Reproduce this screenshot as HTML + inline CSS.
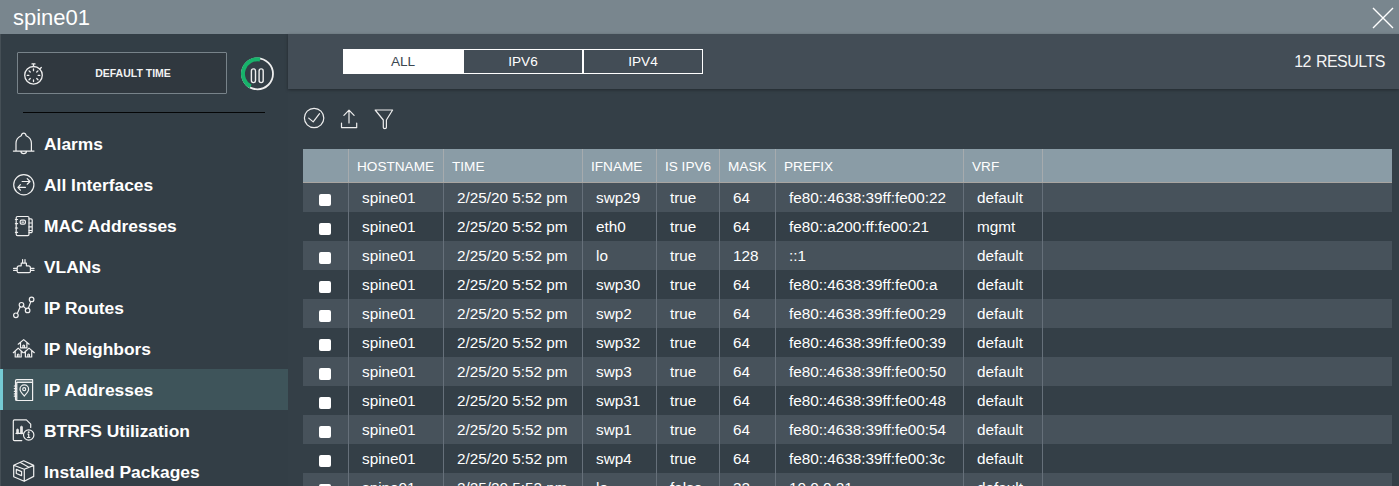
<!DOCTYPE html>
<html><head><meta charset="utf-8">
<style>
*{box-sizing:border-box;margin:0;padding:0}
html,body{width:1399px;height:486px;overflow:hidden;background:#343f47;font-family:"Liberation Sans",sans-serif;color:#fff}
#hdr{position:absolute;left:0;top:0;width:1399px;height:34px;background:#79868e}
#title{position:absolute;left:13px;top:5px;font-size:22px;line-height:26px;color:#fff}
#close{position:absolute;left:1372px;top:7px;width:22px;height:22px}
#side{position:absolute;left:0;top:34px;width:288px;height:452px;background:#333e46}
#dt{position:absolute;left:17px;top:18px;width:210px;height:42px;border:1px solid #78838a;background:#30383f;border-radius:1px}
#dt span{position:absolute;left:0;width:100%;text-align:center;top:14px;font-size:10.5px;font-weight:700;line-height:13px;padding-left:22px;color:#f2f2f2}
#sep{position:absolute;left:23px;top:78px;width:242px;height:1px;background:#050607}
.mi{position:absolute;left:0;width:288px;height:41px}
.mi .lbl{position:absolute;left:44px;top:11px;font-size:17.4px;font-weight:700;line-height:20px;white-space:nowrap}
.mi svg{position:absolute;left:0;top:0}
.mi.sel{background:#3e545a}
.mi.sel:before{content:"";position:absolute;left:0;top:0;width:3px;height:41px;background:#74cad3}
#main{position:absolute;left:288px;top:34px;width:1111px;height:452px;background:#343f47}
#topp{position:absolute;left:0;top:0;width:1111px;height:55px;background:#434d56;box-shadow:0 1px 3px rgba(0,0,0,.35)}
.seg{position:absolute;top:15px;height:25px;width:120px;border:1px solid #fff;font-size:13.6px;line-height:23px;text-align:center;color:#fff}
.seg.on{background:#fff;color:#3b4650}
#res{position:absolute;right:14px;top:18px;font-size:16px;line-height:20px;color:#f4f4f4;letter-spacing:-0.5px;word-spacing:1px}
#tools svg{position:absolute}
#tbl{position:absolute;left:303px;top:149px;width:1089px;border-collapse:collapse;table-layout:fixed}
.th{position:absolute;background:#8a9ca6}
.thb{position:absolute;height:1px;background:#a8a5a1}
.ht{position:absolute;font-size:13.6px;line-height:35px;color:#fff;white-space:nowrap}
.ro,.re{position:absolute;height:29px;background:#47525b}
.re{background:#343f47}
.cb{position:absolute;width:12px;height:12px;background:#fff;border-radius:2px}
.td{position:absolute;font-size:15.3px;line-height:29px;color:#fff;white-space:nowrap}
.vlh{position:absolute;width:1px;height:33px;background:#a6abae}
.vl{position:absolute;width:1px;height:310px;background:#66707a}
</style></head><body>
<div id="hdr"><div id="title">spine01</div>
<svg id="close" viewBox="0 0 22 22"><path d="M1 1L21 21M21 1L1 21" stroke="#fff" stroke-width="1.4"/></svg>
</div>
<div id="side"><div style="position:absolute;left:0;top:0;width:1px;height:452px;background:#454f56"></div>
  <div id="dt"><svg style="position:absolute;left:0;top:0" width="60" height="45" viewBox="0 0 60 45" fill="none" stroke="#eee" stroke-width="1.3" stroke-linecap="round"><g transform="translate(-1 1)"><circle cx="16.5" cy="21.3" r="8.8"/><path d="M16.5 12.5V10M15 9.9H18M22.8 15L24.3 13.5"/><path d="M16.50 16.70L16.50 15.00M19.75 18.05L20.95 16.85M21.10 21.30L22.80 21.30M19.75 24.55L20.95 25.75M16.50 25.90L16.50 27.60M13.25 24.55L12.05 25.75M11.90 21.30L10.20 21.30M13.25 18.05L12.05 16.85" stroke-width="1.3"/></g></svg><span>DEFAULT TIME</span></div>
  <svg id="pause" style="position:absolute;left:232px;top:16px" width="50" height="48" viewBox="0 0 50 48" fill="none"><circle cx="25.5" cy="23.8" r="15.5" stroke="#eee" stroke-width="1.8"/><path d="M28 9.5A14.5 14.5 0 0 0 18.7 36.6" stroke="#17b36b" stroke-width="4"/><rect x="19.4" y="18.9" width="4.1" height="13.7" rx="2" stroke="#eee" stroke-width="1.4"/><rect x="27.1" y="18.9" width="4.1" height="13.7" rx="2" stroke="#eee" stroke-width="1.4"/></svg>
  <div id="sep"></div>
  <div class="mi" style="top:89px"><svg width="44" height="41" viewBox="0 0 44 41" fill="none" stroke="#f0f0f0" stroke-width="1.2" stroke-linecap="round" stroke-linejoin="round"><path d="M16 28V20.3C16 16.2 18.2 14.2 21.2 12.8C21.6 11 22.4 10.1 23.7 10.1C25 10.1 25.8 11 26.2 12.8C29.2 14.2 31.4 16.2 31.4 20.3V28M13.4 28.1H34M20.9 28.3A2.8 2.4 0 0 0 26.5 28.3"/></svg><span class="lbl">Alarms</span></div>
  <div class="mi" style="top:130px"><svg width="44" height="41" viewBox="0 0 44 41" fill="none" stroke="#f0f0f0" stroke-width="1.2" stroke-linecap="round" stroke-linejoin="round"><circle cx="23.8" cy="20.7" r="10.1"/><path d="M22.1 17.5H30M27.2 14.6L30 17.5L27.2 20.2M25.4 23.4H17.9M20.4 20.7L17.9 23.4L20.4 26.2"/></svg><span class="lbl">All Interfaces</span></div>
  <div class="mi" style="top:171px"><svg width="44" height="41" viewBox="0 0 44 41" fill="none" stroke="#f0f0f0" stroke-width="1.2" stroke-linecap="round" stroke-linejoin="round"><g transform="translate(0 0.6)"><rect x="16.2" y="10.9" width="12.8" height="19.1" rx="1.3"/><path d="M29 13.2H31a1.2 1.2 0 0 1 1.2 1.2V25.8a1.2 1.2 0 0 1-1.2 1.2H29M29 17.4H32.2M29 21.3H32.2M29 24.9H32.2M15.4 13.9H17.6M15.4 18.1H17.6M15.4 22.4H17.6M15.4 26.7H17.6"/><rect x="20.2" y="14.5" width="5.2" height="4" rx="1.4"/><path d="M21.9 16.5H23.7"/></g></svg><span class="lbl">MAC Addresses</span></div>
  <div class="mi" style="top:212px"><svg width="44" height="41" viewBox="0 0 44 41" fill="none" stroke="#f0f0f0" stroke-width="1.2" stroke-linecap="round" stroke-linejoin="round"><path d="M22.6 13.5V16.8M25 13.5V16.8M21.2 17.2V19.8H19.2Q17.2 19.8 17.2 21.8V25.5Q17.2 26.7 18.4 26.7H29.2Q30.4 26.7 30.4 25.5V21.8Q30.4 19.8 28.4 19.8H26.4V17.2ZM13.6 22.4H17.2M13.6 24.4H17.2M30.4 22.4H34M30.4 24.4H34"/></svg><span class="lbl">VLANs</span></div>
  <div class="mi" style="top:253px"><svg width="44" height="41" viewBox="0 0 44 41" fill="none" stroke="#f0f0f0" stroke-width="1.2" stroke-linecap="round" stroke-linejoin="round"><path d="M17.3 26.5L20.2 19.8M23 19L26.1 21.9M28.4 21.2L30.8 14.6"/><circle cx="15.9" cy="28.3" r="2.3"/><circle cx="21.5" cy="17.8" r="2.3"/><circle cx="27.6" cy="23.4" r="2.3"/><circle cx="31.6" cy="12.4" r="2.3"/></svg><span class="lbl">IP Routes</span></div>
  <div class="mi" style="top:294px"><svg width="44" height="41" viewBox="0 0 44 41" fill="none" stroke="#f0f0f0" stroke-width="1.2" stroke-linecap="round" stroke-linejoin="round"><path d="M18.2 16.2L23.7 11.6L29.1 16.2M20.5 14.5V19.8H26.9V14.5M22.9 19.8V17.6Q23.7 16.6 24.5 17.6V19.8M13.3 24.7L18.2 20.1L23.1 24.7M15.2 23V29H21.2V23M17.4 29V26.5Q18.2 25.5 19 26.5V29M24.1 24.7L29 20.1L34.3 24.7M25.4 23V29H31.7V23M27.8 29V26.5Q28.6 25.5 29.4 26.5V29"/></svg><span class="lbl">IP Neighbors</span></div>
  <div class="mi sel" style="top:335px"><svg width="44" height="41" viewBox="0 0 44 41" fill="none" stroke="#f0f0f0" stroke-width="1.2" stroke-linecap="round" stroke-linejoin="round"><g transform="translate(0 0.5)"><path d="M16.8 10.2H32.6V31H16.8Q15.5 31 15.5 29.7V11.5Q15.5 10.2 16.8 10.2ZM16.8 12.8H32.6M16.8 12.8V31M14.3 16.5H16.6M14.3 19.1H16.6M14.3 21.8H16.6M14.3 24.4H16.6M14.3 26.7H16.6"/><path d="M17 11.2H32.2V12.2H17Z" fill="#9aa6a8" stroke="none"/></g><path d="M24.3 27C22.5 25 20 22.5 20 20.2A4.3 4.3 0 0 1 28.6 20.2C28.6 22.5 26.1 25 24.3 27Z"/><circle cx="24.2" cy="20.2" r="1.5"/></svg><span class="lbl">IP Addresses</span></div>
  <div class="mi" style="top:376px"><svg width="44" height="41" viewBox="0 0 44 41" fill="none" stroke="#f0f0f0" stroke-width="1.2" stroke-linecap="round" stroke-linejoin="round"><path d="M21.8 30.6H14.5Q13.3 30.6 13.3 29.4V11.1Q13.3 9.9 14.5 9.9H26.4L30.7 14.2V17.5M16 23.4H22.8"/><path d="M16.7 23.4V19.8Q16.7 19 17.5 19Q18.4 19 18.4 19.8V23.4ZM20.6 23.4V17Q20.6 16.2 21.5 16.2Q22.4 16.2 22.4 17V23.4Z" fill="#e6e6e6" stroke-width="0.8"/><circle cx="28.7" cy="25" r="5.2"/><path d="M28.7 24.1V27.4M27.6 27.5H29.8M27.9 24.1H28.7"/><circle cx="28.7" cy="22.2" r="0.4" fill="#fff"/></svg><span class="lbl">BTRFS Utilization</span></div>
  <div class="mi" style="top:417px"><svg width="44" height="41" viewBox="0 0 44 41" fill="none" stroke="#f0f0f0" stroke-width="1.2" stroke-linecap="round" stroke-linejoin="round"><path d="M23.7 9.8L33.7 14.4V25.4L24.2 30.3L13.7 25.7V14.3ZM13.7 14.3L24.3 18.3L33.7 14.4M24.3 18.3V30.3M20.4 11.6L28.8 16.3"/><path d="M16.3 18.4L21.6 20.6V24.6L16.3 22.5Z"/></svg><span class="lbl">Installed Packages</span></div>
</div>
<div id="main">
  <svg style="position:absolute;left:0;top:0" width="400" height="140" viewBox="288 34 400 140" fill="none" stroke="#eee" stroke-width="1.2" stroke-linecap="round" stroke-linejoin="round">
<circle cx="314.1" cy="118" r="9.7"/><path d="M308.7 118.1L313.2 121.9L319.5 113.7"/>
<path d="M349 110V123M343.9 115.3L349 110.2L354.1 115.3M341.5 123V127.6H356.7V123"/>
<path d="M375.2 110H392.6L386.4 120V127.6Q386.4 128.6 384.8 128.6Q383.3 128.6 383.3 127.6V120Z"/>
</svg>
  <div id="topp">
    <div class="seg on" style="left:55px">ALL</div>
    <div class="seg" style="left:175px">IPV6</div>
    <div class="seg" style="left:295px">IPV4</div>
    <div id="res">12 RESULTS</div>
  </div>
</div>
<!--TBL-->
<div class="th" style="left:303px;top:149px;width:1089px;height:33px"></div>
<div class="thb" style="left:303px;top:182px;width:1089px"></div>
<div class="ht" style="left:357px;top:149px">HOSTNAME</div>
<div class="ht" style="left:452px;top:149px">TIME</div>
<div class="ht" style="left:591px;top:149px">IFNAME</div>
<div class="ht" style="left:665px;top:149px">IS IPV6</div>
<div class="ht" style="left:728px;top:149px">MASK</div>
<div class="ht" style="left:784px;top:149px">PREFIX</div>
<div class="ht" style="left:972px;top:149px">VRF</div>
<div class="ro" style="left:303px;top:183px;width:1089px"></div>
<div class="cb" style="left:319px;top:194px"></div>
<div class="td" style="left:362px;top:183px">spine01</div>
<div class="td" style="left:457px;top:183px">2/25/20 5:52 pm</div>
<div class="td" style="left:596px;top:183px">swp29</div>
<div class="td" style="left:670px;top:183px">true</div>
<div class="td" style="left:733px;top:183px">64</div>
<div class="td" style="left:789px;top:183px">fe80::4638:39ff:fe00:22</div>
<div class="td" style="left:977px;top:183px">default</div>
<div class="re" style="left:303px;top:212px;width:1089px"></div>
<div class="cb" style="left:319px;top:223px"></div>
<div class="td" style="left:362px;top:212px">spine01</div>
<div class="td" style="left:457px;top:212px">2/25/20 5:52 pm</div>
<div class="td" style="left:596px;top:212px">eth0</div>
<div class="td" style="left:670px;top:212px">true</div>
<div class="td" style="left:733px;top:212px">64</div>
<div class="td" style="left:789px;top:212px">fe80::a200:ff:fe00:21</div>
<div class="td" style="left:977px;top:212px">mgmt</div>
<div class="ro" style="left:303px;top:241px;width:1089px"></div>
<div class="cb" style="left:319px;top:252px"></div>
<div class="td" style="left:362px;top:241px">spine01</div>
<div class="td" style="left:457px;top:241px">2/25/20 5:52 pm</div>
<div class="td" style="left:596px;top:241px">lo</div>
<div class="td" style="left:670px;top:241px">true</div>
<div class="td" style="left:733px;top:241px">128</div>
<div class="td" style="left:789px;top:241px">::1</div>
<div class="td" style="left:977px;top:241px">default</div>
<div class="re" style="left:303px;top:270px;width:1089px"></div>
<div class="cb" style="left:319px;top:281px"></div>
<div class="td" style="left:362px;top:270px">spine01</div>
<div class="td" style="left:457px;top:270px">2/25/20 5:52 pm</div>
<div class="td" style="left:596px;top:270px">swp30</div>
<div class="td" style="left:670px;top:270px">true</div>
<div class="td" style="left:733px;top:270px">64</div>
<div class="td" style="left:789px;top:270px">fe80::4638:39ff:fe00:a</div>
<div class="td" style="left:977px;top:270px">default</div>
<div class="ro" style="left:303px;top:299px;width:1089px"></div>
<div class="cb" style="left:319px;top:310px"></div>
<div class="td" style="left:362px;top:299px">spine01</div>
<div class="td" style="left:457px;top:299px">2/25/20 5:52 pm</div>
<div class="td" style="left:596px;top:299px">swp2</div>
<div class="td" style="left:670px;top:299px">true</div>
<div class="td" style="left:733px;top:299px">64</div>
<div class="td" style="left:789px;top:299px">fe80::4638:39ff:fe00:29</div>
<div class="td" style="left:977px;top:299px">default</div>
<div class="re" style="left:303px;top:328px;width:1089px"></div>
<div class="cb" style="left:319px;top:339px"></div>
<div class="td" style="left:362px;top:328px">spine01</div>
<div class="td" style="left:457px;top:328px">2/25/20 5:52 pm</div>
<div class="td" style="left:596px;top:328px">swp32</div>
<div class="td" style="left:670px;top:328px">true</div>
<div class="td" style="left:733px;top:328px">64</div>
<div class="td" style="left:789px;top:328px">fe80::4638:39ff:fe00:39</div>
<div class="td" style="left:977px;top:328px">default</div>
<div class="ro" style="left:303px;top:357px;width:1089px"></div>
<div class="cb" style="left:319px;top:368px"></div>
<div class="td" style="left:362px;top:357px">spine01</div>
<div class="td" style="left:457px;top:357px">2/25/20 5:52 pm</div>
<div class="td" style="left:596px;top:357px">swp3</div>
<div class="td" style="left:670px;top:357px">true</div>
<div class="td" style="left:733px;top:357px">64</div>
<div class="td" style="left:789px;top:357px">fe80::4638:39ff:fe00:50</div>
<div class="td" style="left:977px;top:357px">default</div>
<div class="re" style="left:303px;top:386px;width:1089px"></div>
<div class="cb" style="left:319px;top:397px"></div>
<div class="td" style="left:362px;top:386px">spine01</div>
<div class="td" style="left:457px;top:386px">2/25/20 5:52 pm</div>
<div class="td" style="left:596px;top:386px">swp31</div>
<div class="td" style="left:670px;top:386px">true</div>
<div class="td" style="left:733px;top:386px">64</div>
<div class="td" style="left:789px;top:386px">fe80::4638:39ff:fe00:48</div>
<div class="td" style="left:977px;top:386px">default</div>
<div class="ro" style="left:303px;top:415px;width:1089px"></div>
<div class="cb" style="left:319px;top:426px"></div>
<div class="td" style="left:362px;top:415px">spine01</div>
<div class="td" style="left:457px;top:415px">2/25/20 5:52 pm</div>
<div class="td" style="left:596px;top:415px">swp1</div>
<div class="td" style="left:670px;top:415px">true</div>
<div class="td" style="left:733px;top:415px">64</div>
<div class="td" style="left:789px;top:415px">fe80::4638:39ff:fe00:54</div>
<div class="td" style="left:977px;top:415px">default</div>
<div class="re" style="left:303px;top:444px;width:1089px"></div>
<div class="cb" style="left:319px;top:455px"></div>
<div class="td" style="left:362px;top:444px">spine01</div>
<div class="td" style="left:457px;top:444px">2/25/20 5:52 pm</div>
<div class="td" style="left:596px;top:444px">swp4</div>
<div class="td" style="left:670px;top:444px">true</div>
<div class="td" style="left:733px;top:444px">64</div>
<div class="td" style="left:789px;top:444px">fe80::4638:39ff:fe00:3c</div>
<div class="td" style="left:977px;top:444px">default</div>
<div class="ro" style="left:303px;top:473px;width:1089px"></div>
<div class="cb" style="left:319px;top:484px"></div>
<div class="td" style="left:362px;top:473px">spine01</div>
<div class="td" style="left:457px;top:473px">2/25/20 5:52 pm</div>
<div class="td" style="left:596px;top:473px">lo</div>
<div class="td" style="left:670px;top:473px">false</div>
<div class="td" style="left:733px;top:473px">32</div>
<div class="td" style="left:789px;top:473px">10.0.0.21</div>
<div class="td" style="left:977px;top:473px">default</div>
<div class="vlh" style="left:348px;top:149px"></div>
<div class="vl" style="left:348px;top:183px"></div>
<div class="vlh" style="left:443px;top:149px"></div>
<div class="vl" style="left:443px;top:183px"></div>
<div class="vlh" style="left:582px;top:149px"></div>
<div class="vl" style="left:582px;top:183px"></div>
<div class="vlh" style="left:656px;top:149px"></div>
<div class="vl" style="left:656px;top:183px"></div>
<div class="vlh" style="left:719px;top:149px"></div>
<div class="vl" style="left:719px;top:183px"></div>
<div class="vlh" style="left:775px;top:149px"></div>
<div class="vl" style="left:775px;top:183px"></div>
<div class="vlh" style="left:963px;top:149px"></div>
<div class="vl" style="left:963px;top:183px"></div>
<div class="vlh" style="left:1042px;top:149px"></div>
<div class="vl" style="left:1042px;top:183px"></div>
<!--/TBL-->
</body></html>
